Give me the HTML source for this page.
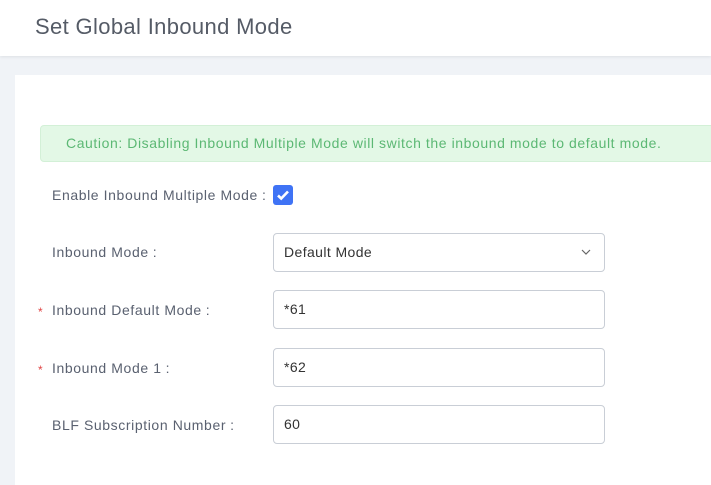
<!DOCTYPE html>
<html><head><style>
*{margin:0;padding:0;box-sizing:border-box}
body{width:711px;height:478px;overflow:hidden;background:#f0f3f7;font-family:"Liberation Sans",sans-serif;position:relative}
.hdr{position:absolute;left:0;top:0;width:711px;height:56px;background:#fff;box-shadow:0 1px 3px rgba(0,0,0,.08)}
.hdr h1{position:absolute;left:35px;top:14px;font-size:22px;letter-spacing:0.35px;font-weight:normal;color:#555b66}
.card{position:absolute;left:15px;top:75px;width:700px;height:410px;background:#fff}
.alert{position:absolute;left:40px;top:125px;width:690px;height:37px;background:#e3f8e6;border:1px solid #d3f0d7;border-radius:4px;color:#5cb874;font-size:14px;letter-spacing:0.58px;line-height:35px;padding-left:25px;white-space:nowrap}
.lbl{position:absolute;left:52px;font-size:14px;color:#5a6170;letter-spacing:0.6px;white-space:nowrap}
.lbl i{font-style:normal;margin-left:4px}
.star{position:absolute;left:38px;color:#e04545;font-size:12px}
.inp{position:absolute;left:273px;width:332px;height:39px;border:1px solid #c9ced6;border-radius:4px;font-size:14px;letter-spacing:0.4px;color:#333;line-height:37px;padding-left:10px}
.cb{position:absolute;left:273px;top:185px;width:20px;height:20px;background:#3f73f5;border-radius:3px}
</style></head><body>
<div class="hdr"><h1>Set Global Inbound Mode</h1></div>
<div class="card"></div>
<div class="alert">Caution: Disabling Inbound Multiple Mode will switch the inbound mode to default mode.</div>
<div class="lbl" style="top:187px">Enable Inbound Multiple Mode<i>:</i></div>
<div class="cb"><svg width="20" height="20" viewBox="0 0 20 20"><path d="M5 10.5l3.2 3L15 6.5" fill="none" stroke="#fff" stroke-width="2.6"/></svg></div>
<div class="lbl" style="top:244px">Inbound Mode<i>:</i></div>
<div class="inp" style="top:233px">Default Mode<svg style="position:absolute;right:13px;top:15px" width="10" height="7" viewBox="0 0 10 7"><path d="M1 1l4 4 4-4" fill="none" stroke="#666" stroke-width="1.2"/></svg></div>
<div class="star" style="top:305px">*</div>
<div class="lbl" style="top:302px">Inbound Default Mode<i>:</i></div>
<div class="inp" style="top:290px">*61</div>
<div class="star" style="top:363px">*</div>
<div class="lbl" style="top:360px">Inbound Mode 1<i>:</i></div>
<div class="inp" style="top:348px">*62</div>
<div class="lbl" style="top:417px">BLF Subscription Number<i>:</i></div>
<div class="inp" style="top:405px">60</div>
</body></html>
